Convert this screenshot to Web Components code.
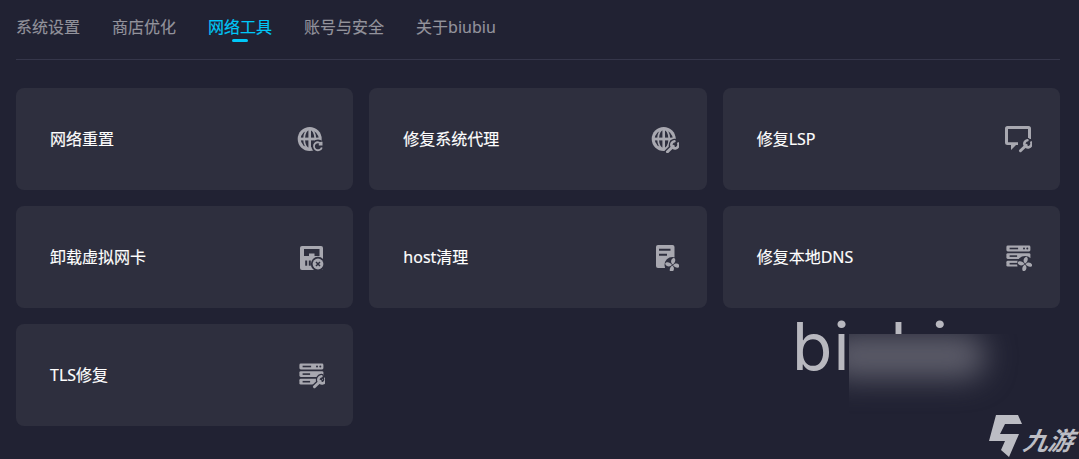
<!DOCTYPE html>
<html lang="zh">
<head>
<meta charset="utf-8">
<title>网络工具</title>
<style>
  html, body { margin: 0; height: 100%; background: #212233; overflow: hidden; }
  body { font-family: "Noto Sans", "Noto Sans CJK SC", sans-serif; }
</style>
</head>
<body>
<x-app>
  <x-tabs slot="tabs">
    <x-tab>系统设置</x-tab>
    <x-tab>商店优化</x-tab>
    <x-tab active>网络工具</x-tab>
    <x-tab>账号与安全</x-tab>
    <x-tab>关于biubiu</x-tab>
  </x-tabs>
  <x-tool-grid slot="grid">
    <x-tool-card icon="globe-ring">网络重置</x-tool-card>
    <x-tool-card icon="globe-wrench">修复系统代理</x-tool-card>
    <x-tool-card icon="monitor-wrench">修复LSP</x-tool-card>
    <x-tool-card icon="disk-x">卸载虚拟网卡</x-tool-card>
    <x-tool-card icon="doc-fan">host清理</x-tool-card>
    <x-tool-card icon="server-fan">修复本地DNS</x-tool-card>
    <x-tool-card icon="server-wrench">TLS修复</x-tool-card>
  </x-tool-grid>
  <x-watermark slot="overlay"></x-watermark>
</x-app>
<script>
const BG = '#2e2f3e', FG = '#a8a8b0';
const wrench = (cx, cy) => {
  const t = `translate(${cx} ${cy}) scale(1.2) translate(-6 -6)`;
  const shape = c => `<g transform="${t}" fill="none" stroke="${c.col}" stroke-linecap="round" stroke-width="${c.w}">
    <path d="M1.8 10.4 L6.6 5.8"/><path stroke-width="${c.w2}" d="M10.9 3.6 A3 3 0 1 1 7.6 1.6"/></g>`;
  return shape({col: BG, w: 4.6, w2: 4.2}) + shape({col: FG, w: 2.5, w2: 2.2});
};
const BLADE = 'M0 -.6 C-3.4 -1.2 -4.2 -5.2 -1.9 -7.2 C.6 -7.4 1.8 -3.4 0 -.6Z';
const fan = (cx, cy) => `<circle cx="${cx}" cy="${cy}" r="8" fill="${BG}"/>
  <g transform="translate(${cx} ${cy}) rotate(25)" fill="${FG}">
    ${[0, 90, 180, 270].map(r => `<path d="${BLADE}" transform="rotate(${r})"/>`).join('')}
  </g>`;
const globe = `<circle cx="12.7" cy="14" r="12" fill="${FG}"/>
  <circle cx="12.7" cy="14" r="9" fill="${BG}"/>
  <ellipse cx="12.7" cy="14" rx="5.6" ry="10" fill="none" stroke="${FG}" stroke-width="1.8"/>
  <rect x="11.4" y="3" width="2.6" height="22" fill="${FG}"/>
  <rect x="2" y="12.6" width="21.4" height="2.8" fill="${FG}"/>`;
const server = () => [2.6, 10.2, 17.8].map((y, i) =>
  `<rect x="2.4" y="${y}" width="24" height="5.8" rx="1.4" fill="${FG}"/>
   <rect x="5.6" y="${y + 2.1}" width="${i === 0 ? 8.5 : 7.5}" height="1.6" fill="${BG}"/>` +
  (i === 0 ? `<circle cx="20" cy="${y + 2.9}" r="1" fill="${BG}"/><circle cx="23.3" cy="${y + 2.9}" r="1" fill="${BG}"/>` : '')).join('');
const ICONS = {
  'globe-ring': globe + `<circle cx="21" cy="21" r="6.6" fill="${BG}"/>
    <path d="M24.4 19.2 A4 4 0 1 0 24.8 22.4 M24.6 16.8 V19.6 H21.8" fill="none" stroke="${FG}" stroke-width="1.8"/>`,
  'globe-wrench': globe + wrench(21.5, 21.5),
  'monitor-wrench': `<path fill="${FG}" d="M3.5 1 H24.5 A2.5 2.5 0 0 1 27 3.5 V14 H24 V4 H4 V17.2 H14 V20 H12 L7 25 V20 H3.5 A2.5 2.5 0 0 1 1 17.5 V3.5 A2.5 2.5 0 0 1 3.5 1Z"/>` + wrench(21.5, 20.5),
  'disk-x': `<path fill="${FG}" d="M5 3 H24 A2 2 0 0 1 26 5 V25 A2 2 0 0 1 24 27 H5 A2 2 0 0 1 3 25 V5 A2 2 0 0 1 5 3Z"/>
    <path fill="${BG}" d="M7 6 H22.5 V13 H17.5 V10.5 H12 V13 H7Z"/>
    <rect x="8.2" y="17.5" width="2" height="5.2" fill="${BG}"/><rect x="11.8" y="17.5" width="2" height="5.2" fill="${BG}"/>
    <circle cx="21" cy="21" r="7.2" fill="${BG}"/><circle cx="21" cy="21" r="5.4" fill="${FG}"/>
    <path d="M19 19 L23 23 M23 19 L19 23" stroke="${BG}" stroke-width="1.5"/>`,
  'doc-fan': `<path fill="${FG}" d="M7 2 H21.5 A2 2 0 0 1 23.5 4 V25 H7 A2 2 0 0 1 5 23 V4 A2 2 0 0 1 7 2Z"/>
    <path d="M8 6.7 H19.5 M8 11.7 H16" stroke="${BG}" stroke-width="1.9"/>` + fan(21.5, 22),
  'server-fan': server() + fan(21, 21),
  'server-wrench': server() + wrench(22.5, 20.5)
};

class XApp extends HTMLElement {
  constructor() {
    super();
    this.attachShadow({mode: 'open'}).innerHTML = `<style>
      :host { display: block; position: relative; height: 459px; padding: 0 19px 0 16px; box-sizing: border-box; overflow: hidden; }
      .grid { display: block; margin-top: 28px; }
    </style><slot name="tabs"></slot><div class="grid"><slot name="grid"></slot></div><slot name="overlay"></slot>`;
  }
}
class XTabs extends HTMLElement {
  constructor() {
    super();
    this.attachShadow({mode: 'open'}).innerHTML = `<style>
      :host { display: flex; gap: 32px; height: 59px; border-bottom: 1px solid #35364a; align-items: flex-start; }
    </style><slot></slot>`;
  }
}
class XTab extends HTMLElement {
  constructor() {
    super();
    this.attachShadow({mode: 'open'}).innerHTML = `<style>
      :host { display: flex; flex-direction: column; align-items: center; padding-top: 15px; font-size: 16px; line-height: 24px; color: #93939c; white-space: nowrap; -webkit-text-stroke: .15px currentColor; }
      :host([active]) { color: #00c8f8; }
      i { display: none; width: 16px; height: 3px; border-radius: 2px; background: #00c8f8; }
      :host([active]) i { display: block; }
    </style><slot></slot><i></i>`;
  }
}
class XToolGrid extends HTMLElement {
  constructor() {
    super();
    this.attachShadow({mode: 'open'}).innerHTML = `<style>
      :host { display: grid; grid-template-columns: repeat(3, 1fr); grid-auto-rows: 102px; gap: 16px; }
    </style><slot></slot>`;
  }
}
class XIcon extends HTMLElement {
  constructor() { super(); this.attachShadow({mode: 'open'}); }
  connectedCallback() {
    this.shadowRoot.innerHTML = `<style>:host { display: block; width: 28px; height: 28px; flex: none; } svg { display: block; }</style>
      <svg width="28" height="28" viewBox="0 0 28 28" aria-hidden="true">${ICONS[this.getAttribute('name')] || ''}</svg>`;
  }
}
class XToolCard extends HTMLElement {
  constructor() { super(); this.attachShadow({mode: 'open'}); }
  connectedCallback() {
    this.shadowRoot.innerHTML = `<style>
      :host { display: flex; align-items: center; justify-content: space-between; padding: 0 28px 0 34px; background: ${BG}; border-radius: 8px; color: #fff; font-size: 16px; font-weight: 400; -webkit-text-stroke: .15px #fff; }
      span { padding-bottom: 2px; }
    </style><span><slot></slot></span><x-icon name="${this.getAttribute('icon')}"></x-icon>`;
  }
}
class XWatermark extends HTMLElement {
  constructor() {
    super();
    this.attachShadow({mode: 'open'}).innerHTML = `<style>
      :host { display: block; position: absolute; inset: 0; pointer-events: none; }
      .logo { position: absolute; left: 792px; top: 304px; font: 400 66px/84px Inter, sans-serif; letter-spacing: 1px; color: #b8b8bf; }
      .blur { position: absolute; left: 849px; top: 334px; width: 190px; height: 90px; background: #212233; overflow: hidden; }
      .blur::before { content: ""; position: absolute; left: -24px; top: 0; width: 160px; height: 44px; border-radius: 20px; background: #5e5e6b; filter: blur(15px); }
      svg { position: absolute; left: 989px; top: 414px; }
      .jy { position: absolute; left: 1024px; top: 424px; font: italic 700 25px/30px "Noto Sans CJK SC", sans-serif; color: #bcbdc4; transform: skewX(-10deg); white-space: nowrap; }
    </style>
    <div class="logo">biubiu</div><div class="blur"></div>
    <svg width="34" height="44" viewBox="0 0 34 44" aria-hidden="true"><path fill="#bcbdc4" d="M7 1 H29 L33 10 H16 L11 20 H30 L20 43 L12 36 L16 27 H0 Z"/></svg>
    <div class="jy">九游</div>`;
  }
}
customElements.define('x-app', XApp);
customElements.define('x-tabs', XTabs);
customElements.define('x-tab', XTab);
customElements.define('x-tool-grid', XToolGrid);
customElements.define('x-icon', XIcon);
customElements.define('x-tool-card', XToolCard);
customElements.define('x-watermark', XWatermark);
</script>
</body>
</html>
